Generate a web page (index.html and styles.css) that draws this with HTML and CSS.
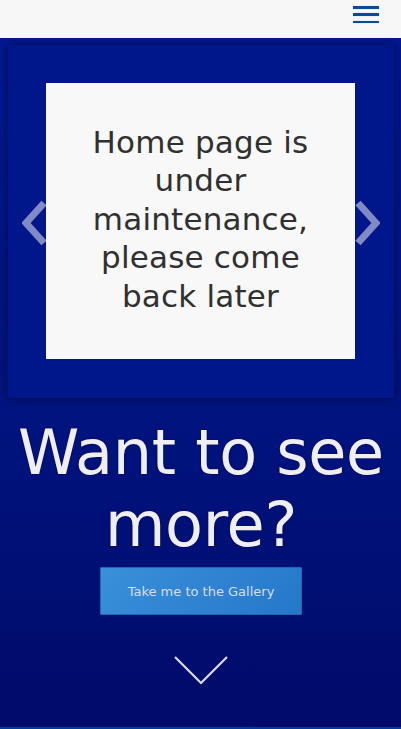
FILE: index.html
```html
<!DOCTYPE html>
<html>
<head>
<meta charset="utf-8">
<link rel="stylesheet" href="styles.css">
</head>
<body>
<header class="topbar">
  <button class="burger" aria-label="menu"><span></span><span></span><span></span></button>
</header>
<main class="hero">
  <section class="carousel">
    <span class="nav nav-prev"><svg width="26" height="46" viewBox="0 0 26 46"><polyline points="22,3 4,23 22,43" fill="none" stroke="rgba(255,255,255,0.5)" stroke-width="7"/></svg></span>
    <div class="slide">
      <p>Home page is under maintenance, please come back later</p>
    </div>
    <span class="nav nav-next"><svg width="26" height="46" viewBox="0 0 26 46"><polyline points="4,3 22,23 4,43" fill="none" stroke="rgba(255,255,255,0.5)" stroke-width="7"/></svg></span>
  </section>
  <h1 class="cta-title">Want to see more?</h1>
  <a class="cta-btn" href="#">Take me to the Gallery</a>
  <div class="down">
    <svg width="56" height="30" viewBox="0 0 56 30"><polyline points="2,2 28,28 54,2" fill="none" stroke="#dcdcec" stroke-width="2.2"/></svg>
  </div>
</main>
<div class="next-strip"></div>
</body>
</html>
```
FILE: styles.css
```css
* { box-sizing: border-box; }
html, body { margin: 0; padding: 0; }
body {
  font-family: "DejaVu Sans", "Open Sans", sans-serif;
  background: #f7f7f7;
  width: 401px;
  overflow: hidden;
}
.topbar {
  height: 38px;
  background: #f7f7f7;
  display: flex;
  justify-content: flex-end;
  align-items: flex-start;
  padding: 6px 22px 0 0;
}
.burger {
  width: 26px;
  height: 17px;
  padding: 0;
  border: 0;
  background: none;
  display: flex;
  flex-direction: column;
  justify-content: space-between;
}
.burger span {
  display: block;
  height: 2.5px;
  width: 100%;
  background: #0b4a99;
  box-shadow: 0 0 1px rgba(11,74,153,0.4);
}
.hero {
  height: 689px;
  background: linear-gradient(180deg, #001892 0%, #00137f 55%, #000b69 100%);
  padding: 7px 7px 0 8px;
  display: flex;
  flex-direction: column;
  align-items: center;
}
.carousel {
  position: relative;
  width: 386px;
  height: 353px;
  background: #00178c;
  box-shadow: 0 0 8px rgba(0,0,0,0.55);
  padding: 38px 39px 39px 38px;
  flex-shrink: 0;
}
.slide {
  position: relative;
  z-index: 1;
  height: 276px;
  background: #f8f8f8;
  display: flex;
  align-items: center;
  justify-content: center;
  padding: 0 28px 4px;
}
.slide p {
  margin: 0;
  text-align: center;
  color: #303030;
  font-size: 31px;
  line-height: 38.5px;
  font-weight: 400;
  letter-spacing: 0.2px;
}
.nav {
  position: absolute;
  top: 155px;
  line-height: 0;
}
.nav-prev { left: 14px; }
.nav-next { right: 14px; }
.cta-title {
  margin: 19px 0 0;
  color: #efeff3;
  text-align: center;
  font-weight: 400;
  font-size: 62px;
  line-height: 72px;
  letter-spacing: -0.3px;
  text-shadow: 0 0 2px rgba(0,0,40,0.6);
}
.cta-btn {
  margin-top: 6px;
  width: 202px;
  height: 48px;
  display: flex;
  align-items: center;
  justify-content: center;
  background: linear-gradient(135deg, #3a90da, #2578ca);
  border: 1px solid #1f66b4;
  color: #d6dcea;
  font-size: 13px;
  font-weight: 500;
  text-decoration: none;
  border-radius: 1px;
}
.down {
  margin-top: 40px;
  line-height: 0;
}
.next-strip {
  height: 10px;
  background: #003a9a;
}
```
